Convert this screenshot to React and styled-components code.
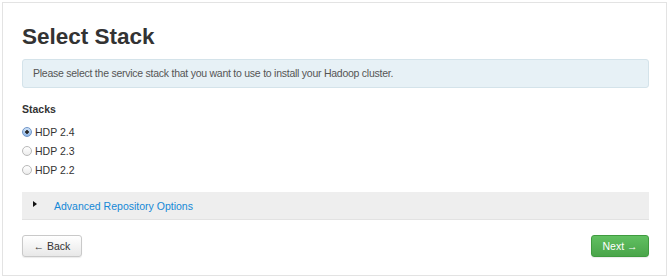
import React, { useState } from "react";
//Styling
import styled, { createGlobalStyle } from "styled-components";

const stacks = ["HDP 2.4", "HDP 2.3", "HDP 2.2"];

const App = () => {
  const [selected, setSelected] = useState("HDP 2.4");

  return (
    <>
      <GlobalStyle />
      <StyledPanel>
        <StyledTitle>Select Stack</StyledTitle>
        <StyledAlert>
          Please select the service stack that you want to use to install your Hadoop cluster.
        </StyledAlert>

        <StyledLabel>Stacks</StyledLabel>
        <StyledStackList>
          {stacks.map(name => (
            <StyledOption key={name}>
              <StyledRadio
                type="radio"
                name="stack"
                checked={selected === name}
                onChange={() => setSelected(name)}
              />
              {name}
            </StyledOption>
          ))}
        </StyledStackList>

        <StyledAdvanced>
          <StyledCaret />
          <StyledLink href="#">Advanced Repository Options</StyledLink>
        </StyledAdvanced>

        <StyledFooter>
          <StyledButton>&larr; Back</StyledButton>
          <StyledButton $primary>Next &rarr;</StyledButton>
        </StyledFooter>
      </StyledPanel>
    </>
  );
};

const GlobalStyle = createGlobalStyle`
  body {
    margin: 0;
    background: #fff;
    font-family: "Liberation Sans", Arial, sans-serif;
    color: #333;
  }
`;

const StyledPanel = styled.div`
  box-sizing: border-box;
  width: 665px;
  margin: 2px;
  padding: 20px 17px 18px 19px;
  border: 1px solid #e3e3e3;
  background: #fff;
`;

const StyledTitle = styled.h2`
  margin: 0 0 9px;
  font-size: 22.5px;
  line-height: 27px;
  font-weight: bold;
  color: #333;
`;

const StyledAlert = styled.div`
  padding: 6px 10px;
  border: 1px solid #d4e3ea;
  border-radius: 3px;
  background: #e7f1f6;
  color: #555;
  font-size: 10.5px;
  line-height: 15px;
  letter-spacing: -0.25px;
`;

const StyledLabel = styled.div`
  margin-top: 14px;
  font-size: 10.5px;
  line-height: 15px;
  font-weight: bold;
  color: #333;
`;

const StyledStackList = styled.div`
  display: flex;
  flex-direction: column;
  margin-top: 5px;
`;

const StyledOption = styled.label`
  display: flex;
  align-items: center;
  gap: 3px;
  height: 19px;
  font-size: 10.5px;
  color: #333;
`;

const StyledRadio = styled.input`
  appearance: none;
  box-sizing: border-box;
  width: 10px;
  height: 10px;
  margin: 0;
  border-radius: 50%;
  border: 1px solid #b9b9b9;
  background: linear-gradient(#ffffff, #ececec);

  &:checked {
    border-color: #6f95c8;
    background: radial-gradient(circle, #2a2a2a 0 1.5px, transparent 2px),
      linear-gradient(#cfe2f7, #8fb6e6);
  }
`;

const StyledAdvanced = styled.div`
  display: flex;
  align-items: center;
  height: 28px;
  margin-top: 13px;
  padding: 0 11px;
  box-sizing: border-box;
  background: #eeeeee;
  border-bottom: 1px solid #e2e2e2;
`;

const StyledCaret = styled.span`
  width: 0;
  height: 0;
  margin-top: -3px;
  border-top: 3px solid transparent;
  border-bottom: 3px solid transparent;
  border-left: 4px solid #111;
  margin-right: 17px;
`;

const StyledLink = styled.a`
  color: #1588d6;
  font-size: 10.5px;
  text-decoration: none;
`;

const StyledFooter = styled.div`
  display: flex;
  justify-content: space-between;
  margin-top: 15px;
`;

const StyledButton = styled.button`
  height: 22px;
  padding: 0 10.5px;
  border-radius: 3px;
  font-family: inherit;
  font-size: 10.5px;
  cursor: pointer;
  color: ${p => (p.$primary ? "#fff" : "#333")};
  border: 1px solid ${p => (p.$primary ? "#3f9b3f" : "#c9c9c9")};
  background: ${p =>
    p.$primary
      ? "linear-gradient(#61c061, #4aa54a)"
      : "linear-gradient(#ffffff, #e8e8e8)"};
  box-shadow: 0 1px 1px rgba(0, 0, 0, 0.08);
`;

export default App;
